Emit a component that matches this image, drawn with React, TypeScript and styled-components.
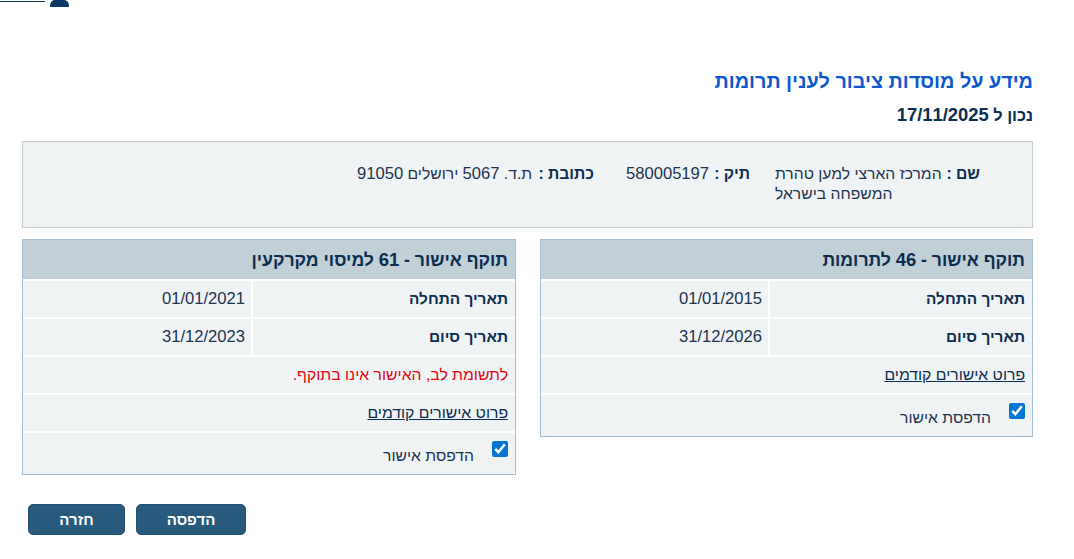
import React from "react";
import styled, { createGlobalStyle } from "styled-components";

const Global = createGlobalStyle`
  html, body { margin: 0; padding: 0; background: #fff; }
  body { font-family: "Liberation Sans", Arial, sans-serif; color: #0b2d50; }
`;

const Page = styled.div`
  width: 1074px;
  height: 559px;
  overflow: hidden;
  box-sizing: border-box;
  display: flex;
  flex-direction: column;
  direction: rtl;
`;

const TopStub = styled.div`
  direction: ltr;
  height: 7px;
  display: flex;
  align-items: flex-start;
  gap: 5px;
  flex: none;
`;

const StubLine = styled.div`
  width: 45px;
  height: 1px;
  margin-top: 1px;
  background: #0b3a66;
`;

const StubIcon = styled.svg`
  width: 19px;
  height: 7px;
  display: block;
`;

const Content = styled.main`
  display: flex;
  flex-direction: column;
  padding: 62px 41px 0 22px;
`;

const Title = styled.h1`
  margin: 0;
  font-size: 19.8px;
  line-height: 24px;
  font-weight: 700;
  color: #0b57d0;
`;

const AsOf = styled.h2`
  margin: 12px 0 0;
  font-size: 16.3px;
  line-height: 20px;
  font-weight: 700;
  color: #0b2d50;
`;

const Num = styled.span<{ $size: number }>`
  font-size: ${(p) => p.$size}px;
`;

const InfoPanel = styled.section`
  margin-top: 16px;
  height: 87px;
  box-sizing: border-box;
  border: 1px solid #c5ccd3;
  background: #f0f3f4;
  padding: 22px 52px 0 0;
  display: flex;
  align-items: flex-start;
  font-size: 15.7px;
  line-height: 20px;
  color: #1d3450;
`;

const InfoItem = styled.div<{ $width: number; $gap: number }>`
  width: ${(p) => p.$width}px;
  margin-left: ${(p) => p.$gap}px;
  flex: none;
  display: flex;
  gap: 4px;
`;

const InfoValue = styled.div`
  flex: 1;
  text-align: left;
`;

const Strong = styled.strong`
  color: #0b2d50;
  font-weight: 700;
  flex: none;
`;

const Columns = styled.div`
  margin-top: 11px;
  display: flex;
  justify-content: space-between;
  align-items: flex-start;
`;

const Card = styled.section<{ $width: number }>`
  width: ${(p) => p.$width}px;
  box-sizing: border-box;
  border: 1px solid #a6bdd6;
  background: #fff;
  display: flex;
  flex-direction: column;
  gap: 2px;
`;

const CardHeader = styled.h3`
  margin: 0;
  height: 39px;
  background: #c1cfd6;
  padding: 0 7px;
  font-size: 17.6px;
  line-height: 40px;
  font-weight: 700;
  color: #0b2d50;
`;

const DateRow = styled.div`
  height: 36px;
  display: grid;
  grid-template-columns: 262px 1fr;
  gap: 2px;
`;

const LabelCell = styled.div`
  background: #f0f3f4;
  padding: 0 7px;
  font-size: 15.4px;
  line-height: 36px;
  font-weight: 700;
  color: #0b2d50;
`;

const ValueCell = styled.div`
  background: #f0f3f4;
  padding: 0 6px;
  font-size: 16.6px;
  line-height: 36px;
  color: #1d3450;
`;

const FullRow = styled.div`
  height: 36px;
  background: #f0f3f4;
  padding: 0 7px;
  font-size: 15.75px;
  line-height: 36px;
`;

const Warning = styled(FullRow)`
  color: #e30613;
`;

const HistoryLink = styled.a`
  color: #0b2d50;
  text-decoration: underline;
  cursor: pointer;
`;

const PrintRow = styled.label`
  height: 41px;
  background: #f0f3f4;
  padding: 0 7px;
  display: flex;
  align-items: flex-start;
  font-size: 15.7px;
  color: #1d3450;
`;

const Check = styled.input`
  width: 16px;
  height: 16px;
  margin: 8px 0 0 18px;
  accent-color: #0075d4;
  flex: none;
`;

const PrintText = styled.span`
  margin-top: 14px;
  line-height: 18px;
`;

const Actions = styled.div`
  margin-top: 29px;
  padding-left: 6px;
  display: flex;
  justify-content: flex-end;
  gap: 11px;
`;

const Button = styled.button<{ $width: number }>`
  width: ${(p) => p.$width}px;
  height: 31px;
  padding: 0;
  border: 1px solid #234f70;
  border-radius: 5px;
  background: #275a7d;
  color: #fff;
  font-family: "Liberation Sans", Arial, sans-serif;
  font-size: 15px;
  font-weight: 700;
`;

const PermitCard = ({
  number,
  topic,
  width,
  start,
  end,
  warning,
}: {
  number: string;
  topic: string;
  width: number;
  start: string;
  end: string;
  warning?: string;
}) => (
  <Card $width={width}>
    <CardHeader>
      תוקף אישור - <Num $size={18.4}>{number}</Num> {topic}
    </CardHeader>
    <DateRow>
      <LabelCell>תאריך התחלה</LabelCell>
      <ValueCell>{start}</ValueCell>
    </DateRow>
    <DateRow>
      <LabelCell>תאריך סיום</LabelCell>
      <ValueCell>{end}</ValueCell>
    </DateRow>
    {warning && <Warning>{warning}</Warning>}
    <FullRow>
      <HistoryLink>פרוט אישורים קודמים</HistoryLink>
    </FullRow>
    <PrintRow>
      <Check type="checkbox" defaultChecked />
      <PrintText>הדפסת אישור</PrintText>
    </PrintRow>
  </Card>
);

export default function App() {
  return (
    <>
      <Global />
      <Page>
        <TopStub>
          <StubLine />
          <StubIcon viewBox="0 0 19 7">
            <path d="M0 7 C0 2 2 0 5 0 H14 C17 0 19 2 19 7 Z" fill="#0b3a66" />
          </StubIcon>
        </TopStub>
        <Content>
          <Title>מידע על מוסדות ציבור לענין תרומות</Title>
          <AsOf>
            נכון ל <Num $size={18.4}>17/11/2025</Num>
          </AsOf>
          <InfoPanel>
            <InfoItem $width={205} $gap={25}>
              <Strong>שם :</Strong>
              <InfoValue>המרכז הארצי למען טהרת המשפחה בישראל</InfoValue>
            </InfoItem>
            <InfoItem $width={124} $gap={32}>
              <Strong>תיק :</Strong>
              <InfoValue>
                <Num $size={16.6}>580005197</Num>
              </InfoValue>
            </InfoItem>
            <InfoItem $width={237} $gap={0}>
              <Strong>כתובת :</Strong>
              <InfoValue>
                ת.ד. <Num $size={16.6}>5067</Num> ירושלים <Num $size={16.6}>91050</Num>
              </InfoValue>
            </InfoItem>
          </InfoPanel>
          <Columns>
            <PermitCard
              number="46"
              topic="לתרומות"
              width={493}
              start="01/01/2015"
              end="31/12/2026"
            />
            <PermitCard
              number="61"
              topic="למיסוי מקרקעין"
              width={494}
              start="01/01/2021"
              end="31/12/2023"
              warning="לתשומת לב, האישור אינו בתוקף."
            />
          </Columns>
          <Actions>
            <Button $width={110}>הדפסה</Button>
            <Button $width={97}>חזרה</Button>
          </Actions>
        </Content>
      </Page>
    </>
  );
}
